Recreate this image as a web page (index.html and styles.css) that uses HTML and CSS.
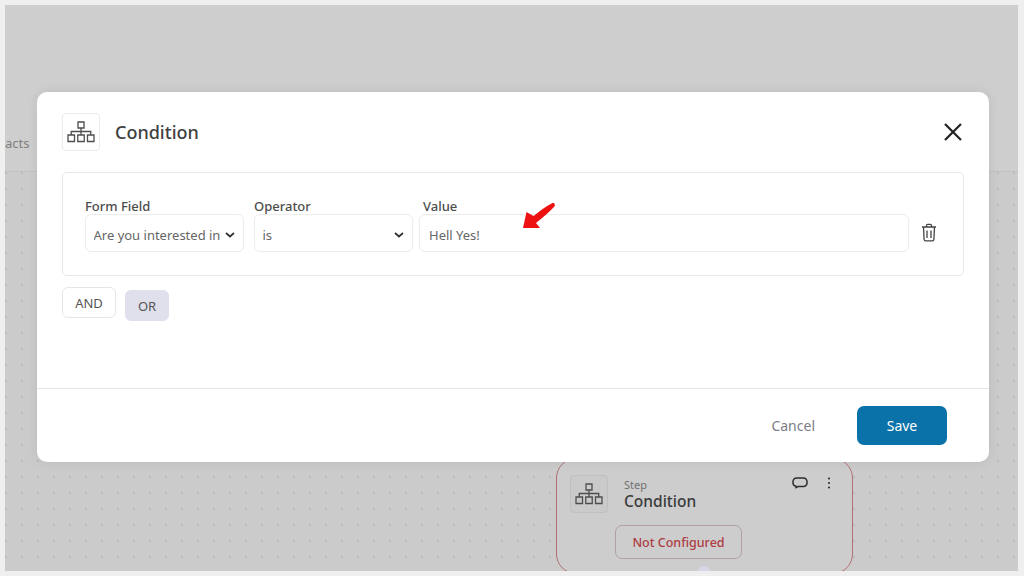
FILE: index.html
```html
<!DOCTYPE html>
<html lang="en">
<head>
<meta charset="utf-8">
<title>Condition</title>
<link rel="stylesheet" href="styles.css">
</head>
<body>
<div class="screen">
  <div class="topbar"><span class="tab">acts</span></div>
  <div class="canvas">
    <div class="node">
      <div class="node-head">
        <span class="icon-box node-icon">
          <svg class="tree" viewBox="0 0 28 22"><use href="#tree"/></svg>
        </span>
        <div class="node-text">
          <span class="node-step">Step</span>
          <span class="node-name">Condition</span>
        </div>
        <svg class="comment" viewBox="0 0 16 12"><path d="M4.500 1h7a3.500 3.500 0 0 1 3.500 3.500v1.500a3.500 3.500 0 0 1-3.500 3.500H6L4 10.500V9.300A3.500 3.500 0 0 1 1 6V4.500A3.500 3.500 0 0 1 4.500 1z"/></svg>
        <svg class="kebab" viewBox="0 0 4 12"><circle cx="2" cy="1.500" r="1.100"/><circle cx="2" cy="6" r="1.100"/><circle cx="2" cy="10.500" r="1.100"/></svg>
      </div>
      <span class="status">Not Configured</span>
    </div>
    <span class="port"></span>
  </div>
  <div class="modal">
    <header class="modal-head">
      <span class="icon-box">
        <svg class="tree" viewBox="0 0 28 22"><use href="#tree"/></svg>
      </span>
      <h1 class="modal-title">Condition</h1>
      <svg class="close" viewBox="0 0 18 18"><path d="M1 1l16 16M17 1L1 17"/></svg>
    </header>
    <section class="modal-body">
      <div class="rule">
        <div class="field field-select">
          <span class="label">Form Field</span>
          <div class="control"><span class="clip">Are you interested in</span><svg class="chev" viewBox="0 0 10 6"><path d="M1 1l4 3.500L9 1"/></svg></div>
        </div>
        <div class="field field-select">
          <span class="label">Operator</span>
          <div class="control"><span class="clip">is</span><svg class="chev" viewBox="0 0 10 6"><path d="M1 1l4 3.500L9 1"/></svg></div>
        </div>
        <div class="field field-value">
          <span class="label label-value">Value</span>
          <div class="control">Hell Yes!</div>
          <svg class="arrow" viewBox="0 0 38 32"><path d="M32.500 3C25 7 19 11.500 13.500 16L6.500 12L3 28L20 28L16 23C22.500 18 29 12 34.500 6.500C35.500 4.500 34.500 2.500 32.500 3z"/></svg>
        </div>
        <svg class="trash" viewBox="0 0 16 19"><path d="M1 4h14M5.500 4V2.500a1.200 1.200 0 0 1 1.200-1.200h2.600a1.200 1.200 0 0 1 1.200 1.200V4M2.500 4l.6 12.500a1.500 1.500 0 0 0 1.500 1.300h6.800a1.500 1.500 0 0 0 1.500-1.300L13.500 4M6 7.500v7.500M10 7.500v7.500"/></svg>
      </div>
      <div class="logic">
        <button class="logic-btn">AND</button>
        <button class="logic-btn logic-active">OR</button>
      </div>
    </section>
    <footer class="modal-foot">
      <span class="cancel">Cancel</span>
      <button class="save">Save</button>
    </footer>
  </div>
</div>
<svg class="defs" aria-hidden="true"><defs>
  <g id="tree"><path d="M11 1h6v6h-6zM1 14h6.500v6.500H1zM10.750 14h6.500v6.500h-6.500zM20.500 14h6.500v6.500h-6.500zM14 7v3.500M4.250 14v-3.500h19.500V14M14 10.500V14"/></g>
</defs></svg>
</body>
</html>
```
FILE: styles.css
```css
* { box-sizing: border-box; }
html, body { margin: 0; height: 100%; }
body {
  background: #efefef;
  padding: 5px 6px 5px 5px;
  font-family: "Noto Sans", "Open Sans", sans-serif;
  overflow: hidden;
}
.defs { position: absolute; width: 0; height: 0; }
.screen {
  position: relative;
  height: 566px;
  background: #cdcdcd;
  display: flex;
  flex-direction: column;
}
.topbar {
  height: 167px;
  flex: none;
  border-bottom: 1px solid #c1c1c1;
  background: #cecece;
  padding: 129px 0 0;
  overflow: hidden;
}
.tab {
  display: block;
  font-size: 13px;
  line-height: 18px;
  color: #808080;
}
.canvas {
  position: relative;
  flex: 1;
  background-color: #cbcbcb;
  background-image: radial-gradient(circle, #bababa 0.8px, transparent 1.300px);
  background-size: 16px 16px;
  background-position: -7px 9px;
  overflow: hidden;
}
.node {
  position: absolute;
  left: 551px;
  top: 286px;
  width: 297px;
  height: 116px;
  border: 1.500px solid #b27072;
  border-radius: 20px;
  background: #cdcdcd;
  padding: 16px 12px 0 13px;
}
.node-head { display: flex; align-items: flex-start; }
.icon-box {
  width: 38px;
  height: 38px;
  flex: none;
  display: flex;
  align-items: center;
  justify-content: center;
  border: 1px solid #ebebeb;
  border-radius: 4px;
  background: #fff;
}
.node-icon { background: #cacaca; border-color: #bfbfbf; }
.tree {
  width: 28px;
  height: 22px;
  fill: none;
  stroke: #4e4e4e;
  stroke-width: 1.300;
}
.node-text { margin-left: 16px; display: flex; flex-direction: column; margin-top: 3px; flex: 1; }
.node-step { font-size: 11px; line-height: 14px; color: #717171; }
.node-name { font-size: 15.500px; line-height: 18px; font-weight: 500; color: #3a3a3a; }
.comment {
  width: 16px;
  height: 12px;
  fill: none;
  stroke: #2d2d2d;
  stroke-width: 1.500;
  margin-right: 19px;
  margin-top: 2px;
}
.kebab { width: 4px; height: 12px; fill: #333; margin-right: 9px; margin-top: 2px; }
.status {
  display: block;
  width: 127px;
  height: 34px;
  margin: 12px 0 0 45px;
  border: 1px solid #b3a0a0;
  border-radius: 7px;
  text-align: center;
  font-size: 12.500px;
  line-height: 34px;
  font-weight: 500;
  color: #ae3c42;
}
.port {
  position: absolute;
  left: 692px;
  top: 394px;
  width: 14px;
  height: 14px;
  border-radius: 50%;
  background: #d6d6e4;
}
.modal {
  position: absolute;
  left: 32px;
  top: 87px;
  width: 952px;
  height: 370px;
  background: #fff;
  border-radius: 10px;
  box-shadow: 0 0 12px rgba(0,0,0,.08);
  display: flex;
  flex-direction: column;
}
.modal-head {
  display: flex;
  align-items: center;
  height: 80px;
  flex: none;
  padding: 0 27px 0 25px;
}
.modal-title {
  margin: 0 0 0 15px;
  flex: 1;
  font-size: 18px;
  line-height: 26px;
  font-weight: 500;
  color: #404040;
}
.close { width: 18px; height: 18px; fill: none; stroke: #222; stroke-width: 2.200; }
.modal-body { flex: 1; padding: 0 25px; }
.rule {
  position: relative;
  display: flex;
  align-items: flex-end;
  height: 104px;
  padding: 0 23px 23px 22px;
  border: 1px solid #e8e8e8;
  border-radius: 5px;
  gap: 10px;
}
.field { display: flex; flex-direction: column; }
.field-select { width: 159px; flex: none; }
.field-value { flex: 1; margin-left: -4px; position: relative; }
.label {
  font-size: 13px;
  line-height: 16px;
  font-weight: 500;
  color: #4d4d4d;
}
.label-value { margin-left: 4px; }
.control {
  display: flex;
  align-items: center;
  justify-content: space-between;
  height: 38px;
  padding: 3px 8px 0 7.500px;
  border: 1px solid #ececec;
  border-radius: 6px;
  font-size: 13px;
  color: #666;
  white-space: nowrap;
}
.field-value .control { padding-left: 9px; }
.clip { overflow: hidden; }
.chev { width: 10px; height: 6px; flex: none; fill: none; stroke: #333; stroke-width: 1.700; margin-left: 4px; }
.arrow { position: absolute; left: 101px; top: 2px; width: 38px; height: 32px; fill: #ee1111; }
.trash {
  width: 16px;
  height: 19px;
  flex: none;
  fill: none;
  stroke: #444;
  stroke-width: 1.300;
  margin: 0 3px 10px 2px;
}
.logic { position: relative; display: flex; align-items: flex-start; gap: 9px; margin-top: 11px; }
.logic-btn {
  width: 54px;
  height: 31px;
  padding: 0;
  border: 1px solid #e6e6e6;
  border-radius: 6px;
  background: #fff;
  font: 13px "Noto Sans", "Open Sans", sans-serif;
  color: #555;
}
.logic-active {
  width: 44px;
  margin-top: 3px;
  border-color: #e0e0ec;
  background: #e0e0ec;
}
.modal-foot {
  height: 74px;
  flex: none;
  display: flex;
  align-items: center;
  justify-content: flex-end;
  border-top: 1px solid #e6e6e6;
  padding: 0 42px 0 0;
}
.cancel { font-size: 14px; color: #7c7c86; margin-right: 42px; }
.save {
  width: 90px;
  height: 39px;
  border: 0;
  border-radius: 7px;
  background: #0a72a8;
  color: #fff;
  font: 400 14px "Noto Sans", "Open Sans", sans-serif;
}
```
